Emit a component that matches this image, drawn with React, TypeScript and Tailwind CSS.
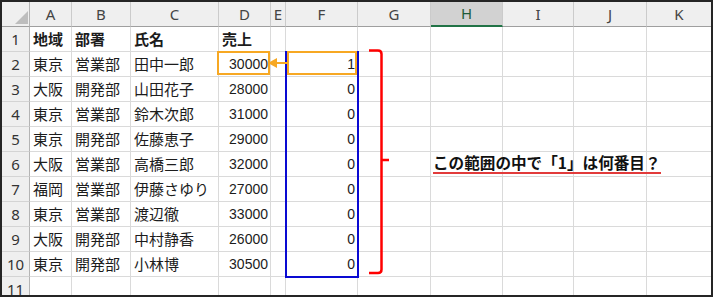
const cols = ["A", "B", "C", "D", "E", "F", "G", "H", "I", "J", "K"];

// sheet contents, row 1 is the bold heading row
const rows: string[][] = [
  ["地域", "部署", "氏名", "売上", "", ""],
  ["東京", "営業部", "田中一郎", "30000", "", "1"],
  ["大阪", "開発部", "山田花子", "28000", "", "0"],
  ["東京", "営業部", "鈴木次郎", "31000", "", "0"],
  ["東京", "開発部", "佐藤恵子", "29000", "", "0"],
  ["大阪", "営業部", "高橋三郎", "32000", "", "0"],
  ["福岡", "営業部", "伊藤さゆり", "27000", "", "0"],
  ["東京", "営業部", "渡辺徹", "33000", "", "0"],
  ["大阪", "開発部", "中村静香", "26000", "", "0"],
  ["東京", "開発部", "小林博", "30500", "", "0"],
  [],
];

const HeaderCell = ({ label, last }: { label: string; last: boolean }) => {
  const selected = label === "H";
  return (
    <div
      className={`flex items-center justify-center font-['Noto_Sans',sans-serif] text-[15px] ${
        selected
          ? "bg-[#d2d2d2] text-[#1d5b39] border-b-2 border-b-[#217346]"
          : "bg-[#efefef] text-[#444] border-b border-b-[#9f9f9f]"
      } ${last ? "" : "border-r border-r-[#cbcbcb]"}`}
    >
      {label}
    </div>
  );
};

const Cell = ({ value, col, bold, last }: { value: string; col: number; bold: boolean; last: boolean }) => {
  const numeric = /^\d+$/.test(value);
  return (
    <div
      className={`flex items-center whitespace-nowrap overflow-hidden bg-white border-b border-[#dadada] ${
        last ? "" : "border-r"
      } ${
        numeric
          ? "justify-end pr-[2px] font-['Liberation_Sans',sans-serif] text-[14px] text-[#1c1c1c]"
          : "pl-[3px] font-['Noto_Sans_CJK_JP',sans-serif] text-[15px] text-[#1c1c1c]"
      } ${bold ? "font-bold" : ""}`}
      data-col={col}
    >
      {value}
    </div>
  );
};

export default function App() {
  return (
    <div className="relative w-[713px] h-[297px] overflow-hidden border-2 border-[#252525] bg-white">
      <div className="grid grid-cols-[28px_42px_59px_88px_52px_15px_72px_73px_72px_71px_73px_64px] grid-rows-[25px_repeat(11,25px)]">
        {/* corner with the select-all triangle */}
        <div className="relative bg-[#efefef] border-r border-r-[#b4b4b4] border-b border-b-[#9f9f9f]">
          <svg className="absolute right-[1px] bottom-[2px]" width="13" height="13" viewBox="0 0 13 13">
            <polygon points="13,0 13,13 0,13" fill="#bdbdbd" />
          </svg>
        </div>
        {cols.map((c, i) => (
          <HeaderCell key={c} label={c} last={i === cols.length - 1} />
        ))}

        {rows.map((row, r) => (
          <div key={r} className="contents">
            <div className="flex items-center justify-center bg-[#efefef] border-r border-r-[#b4b4b4] border-b border-b-[#d4d4d4] font-['Noto_Sans',sans-serif] text-[15px] text-[#333]">
              {r + 1}
            </div>
            {cols.map((c, i) => (
              <Cell key={c} value={row[i] ?? ""} col={i} bold={r === 0} last={i === cols.length - 1} />
            ))}
          </div>
        ))}
      </div>

      {/* annotations drawn over the sheet */}
      <div className="absolute left-[283px] top-[49px] w-[74px] h-[227px] border-2 border-[#0a0ad2]" />
      <div className="absolute left-[215px] top-[49px] w-[53px] h-[24px] border-2 border-[#f7a823]" />
      <div className="absolute left-[285px] top-[49px] w-[70px] h-[24px] border-2 border-[#f7a823]" />

      <svg className="absolute left-0 top-0 pointer-events-none" width="709" height="293" viewBox="2 2 709 293">
        <line x1="276" y1="63" x2="287" y2="63" stroke="#f7a823" strokeWidth="2" />
        <polygon points="268,63 277,58 277,68" fill="#f7a823" />
        <path
          d="M369 50.5 H378 Q381.5 50.5 381.5 54 V269.5 Q381.5 273 378 273 H369 M381.5 160 H389"
          fill="none"
          stroke="#ff0000"
          strokeWidth="2.5"
        />
      </svg>

      <div className="absolute left-[431px] top-[151px] leading-[19px] border-b-2 border-[#e23b3b] font-['Noto_Sans_CJK_JP',sans-serif] text-[15.6px] font-bold text-[#111] whitespace-nowrap">
        この範囲の中で「1」は何番目？
      </div>
    </div>
  );
}
